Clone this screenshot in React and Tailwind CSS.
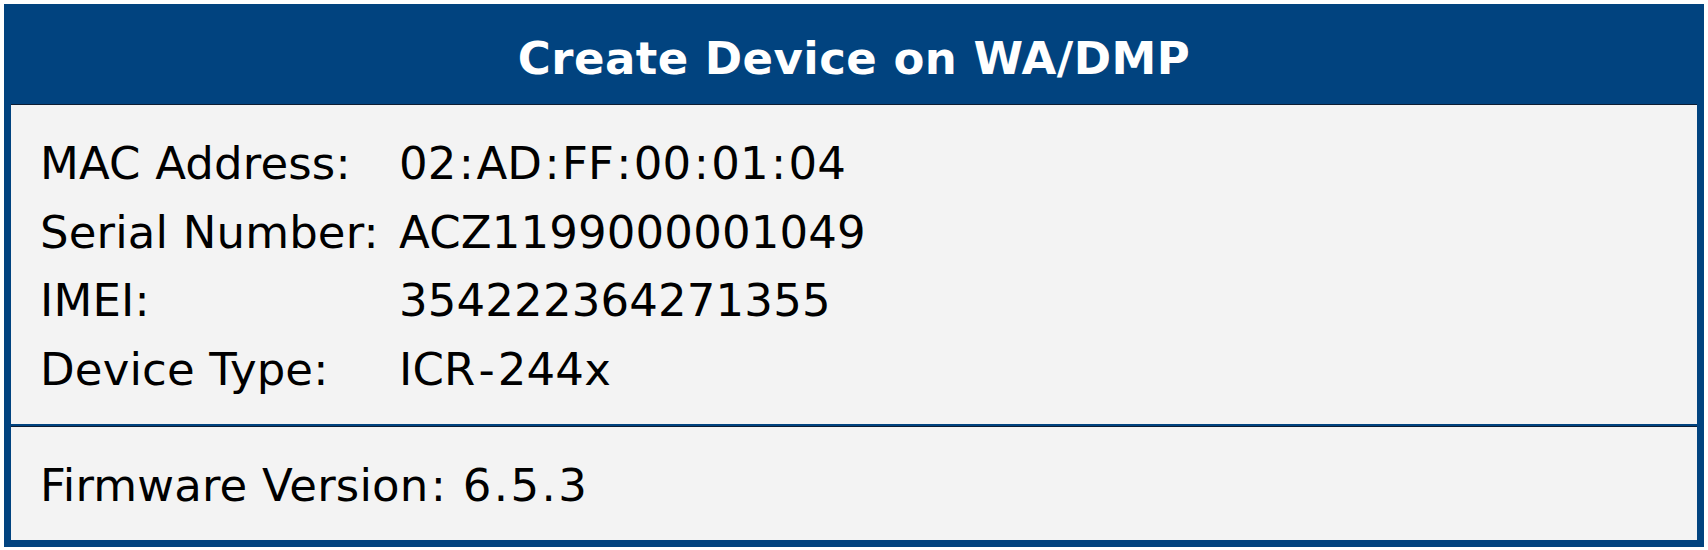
import React from "react";

const device = [
  { label: "MAC Address:", value: "02:AD:FF:00:01:04" },
  { label: "Serial Number:", value: "ACZ1199000001049" },
  { label: "IMEI:", value: "354222364271355" },
  { label: "Device Type:", value: "ICR-244x" },
];

// colons, dots and dashes get a little extra room, as in the router's own font
const spaced = (text) =>
  text.split(/([:.-])/).map((part, i) =>
    part === ":" || part === "." ? (
      <span key={i} className="mx-[2.25px]">
        {part}
      </span>
    ) : part === "-" ? (
      <span key={i} className="mx-[3px]">
        {part}
      </span>
    ) : (
      part
    )
  );

const App = () => {
  return (
    <div className="p-[4px] bg-white font-['DejaVu_Sans',Verdana,sans-serif] text-black">
      <div className="bg-[#01437f] px-[7px] pb-[7px]">
        <div className="h-[100px] pt-[29px] text-center text-white font-bold text-[45px] leading-[52px] tracking-[0.45px]">
          Create Device on WA/DMP
        </div>

        <div className="bg-[#f3f3f3] border-t border-[#0d1d33] pt-[25px] pb-[20px] pl-[29px] text-[45px] leading-[68.5px] tracking-[0.15px]">
          {device.map((row) => (
            <div key={row.label} className="grid grid-cols-[359px_1fr]">
              <span>{row.label}</span>
              <span>{spaced(row.value)}</span>
            </div>
          ))}
        </div>

        <div className="h-[2px]" />

        <div className="bg-[#f3f3f3] border-t border-[#0d1d33] pt-[25px] pb-[19.5px] pl-[29px] text-[45px] leading-[68.5px] tracking-[0.15px]">
          Firmware Version{spaced(":")} {spaced("6.5.3")}
        </div>
      </div>
    </div>
  );
};

export default App;
